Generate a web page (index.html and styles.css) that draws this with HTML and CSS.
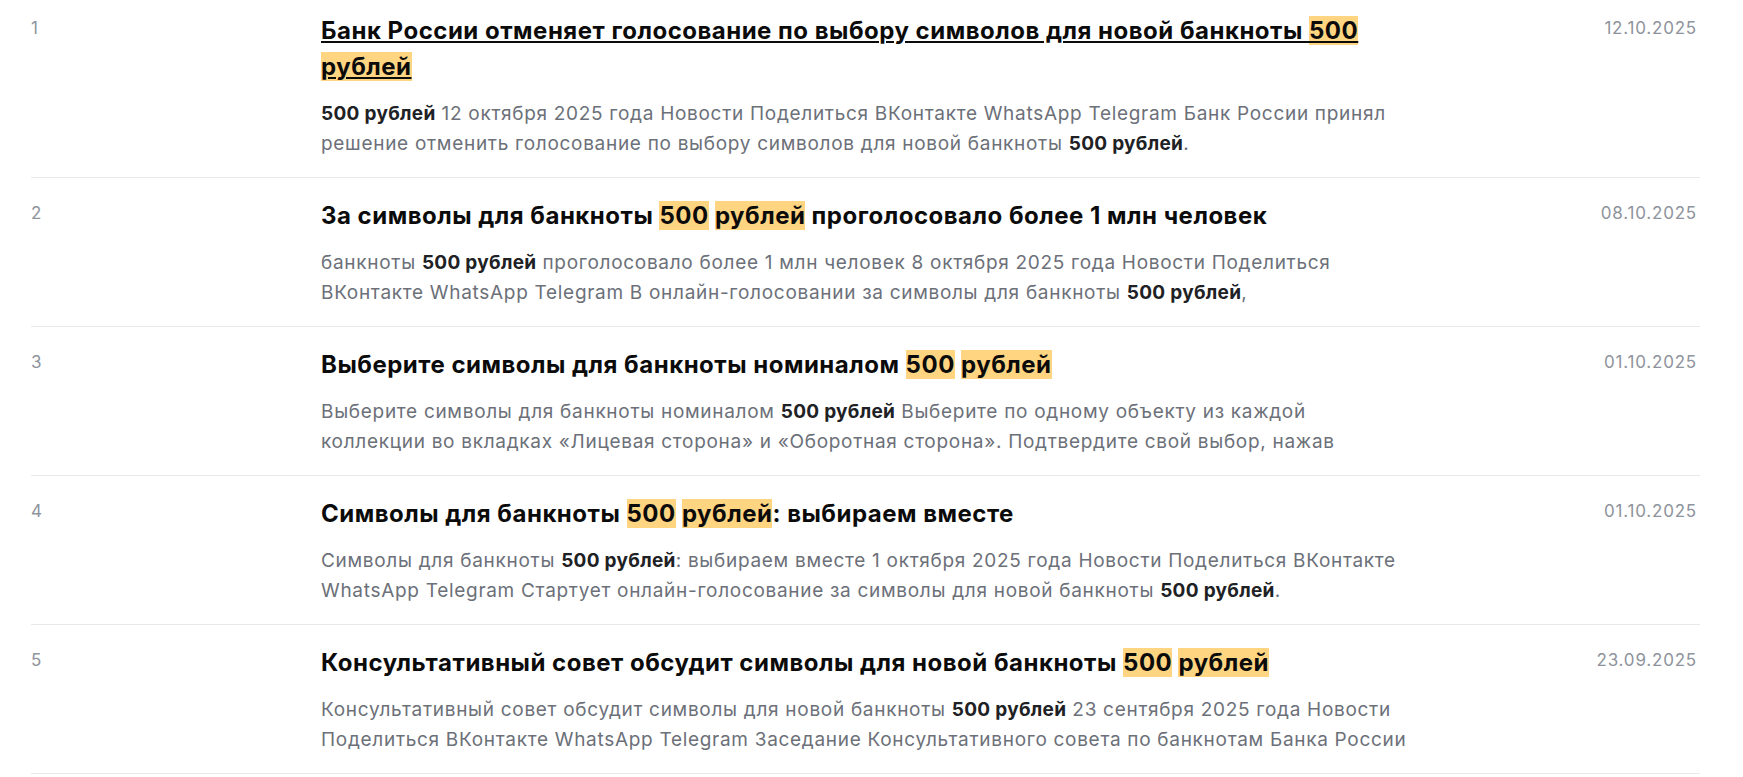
FILE: index.html
```html
<!DOCTYPE html>
<html lang="ru">
<head>
<meta charset="utf-8">
<link rel="stylesheet" href="styles.css">
</head>
<body>
<div class="list">
  <div class="row">
    <div class="num">1</div>
    <div class="content">
      <a class="title link" href="#">Банк России отменяет голосование по выбору символов для новой банкноты <mark>500</mark> <mark>рублей</mark></a>
      <p class="snippet"><b>500 рублей</b> 12 октября 2025 года Новости Поделиться ВКонтакте WhatsApp Telegram Банк России принял решение отменить голосование по выбору символов для новой банкноты <b>500 рублей</b>.</p>
    </div>
    <div class="date">12.10.2025</div>
  </div>
  <div class="row">
    <div class="num">2</div>
    <div class="content">
      <a class="title" href="#">За символы для банкноты <mark>500</mark> <mark>рублей</mark> проголосовало более 1 млн человек</a>
      <p class="snippet">банкноты <b>500 рублей</b> проголосовало более 1 млн человек 8 октября 2025 года Новости Поделиться ВКонтакте WhatsApp Telegram В онлайн-голосовании за символы для банкноты <b>500 рублей</b>,</p>
    </div>
    <div class="date">08.10.2025</div>
  </div>
  <div class="row">
    <div class="num">3</div>
    <div class="content">
      <a class="title" href="#">Выберите символы для банкноты номиналом <mark>500</mark> <mark>рублей</mark></a>
      <p class="snippet">Выберите символы для банкноты номиналом <b>500 рублей</b> Выберите по одному объекту из каждой коллекции во вкладках «Лицевая сторона» и «Оборотная сторона». Подтвердите свой выбор, нажав</p>
    </div>
    <div class="date">01.10.2025</div>
  </div>
  <div class="row">
    <div class="num">4</div>
    <div class="content">
      <a class="title" href="#">Символы для банкноты <mark>500</mark> <mark>рублей</mark>: выбираем вместе</a>
      <p class="snippet">Символы для банкноты <b>500 рублей</b>: выбираем вместе 1 октября 2025 года Новости Поделиться ВКонтакте WhatsApp Telegram Стартует онлайн-голосование за символы для новой банкноты <b>500 рублей</b>.</p>
    </div>
    <div class="date">01.10.2025</div>
  </div>
  <div class="row">
    <div class="num">5</div>
    <div class="content">
      <a class="title" href="#">Консультативный совет обсудит символы для новой банкноты <mark>500</mark> <mark>рублей</mark></a>
      <p class="snippet">Консультативный совет обсудит символы для новой банкноты <b>500 рублей</b> 23 сентября 2025 года Новости Поделиться ВКонтакте WhatsApp Telegram Заседание Консультативного совета по банкнотам Банка России</p>
    </div>
    <div class="date">23.09.2025</div>
  </div>
</div>
</body>
</html>
```

FILE: styles.css
```css
html, body {
  margin: 0;
  padding: 0;
  background: #ffffff;
}
body {
  font-family: Inter, "Noto Sans", sans-serif;
}
.list {
  margin-left: 31px;
  width: 1669px;
}
.row {
  display: grid;
  grid-template-columns: 290px 1090px 1fr;
  padding: 20px 0 18px;
  border-bottom: 1px solid #e8e9eb;
}
.row:first-child {
  padding-top: 13px;
}
.num {
  padding-top: 3px;
  font-size: 17px;
  line-height: 24px;
  letter-spacing: 0.4px;
  color: #8e939c;
}
.date {
  padding-top: 3px;
  padding-right: 3px;
  font-size: 17px;
  line-height: 24px;
  letter-spacing: 0.8px;
  color: #8e939c;
  text-align: right;
}
.title {
  display: block;
  font-size: 24px;
  line-height: 36px;
  font-weight: 700;
  letter-spacing: 0.5px;
  color: #0b0b0b;
  text-decoration: none;
}
.title.link {
  text-decoration: underline;
  text-decoration-thickness: 2px;
  text-underline-offset: 2px;
}
mark {
  background: #ffd582;
  color: inherit;
}
.snippet {
  margin: 14px 0 0;
  font-size: 19px;
  line-height: 30px;
  letter-spacing: 0.7px;
  color: #6c7079;
  display: -webkit-box;
  -webkit-line-clamp: 2;
  -webkit-box-orient: vertical;
  overflow: hidden;
}
.snippet b {
  font-weight: 700;
  letter-spacing: 0.3px;
  color: #202124;
}
```
